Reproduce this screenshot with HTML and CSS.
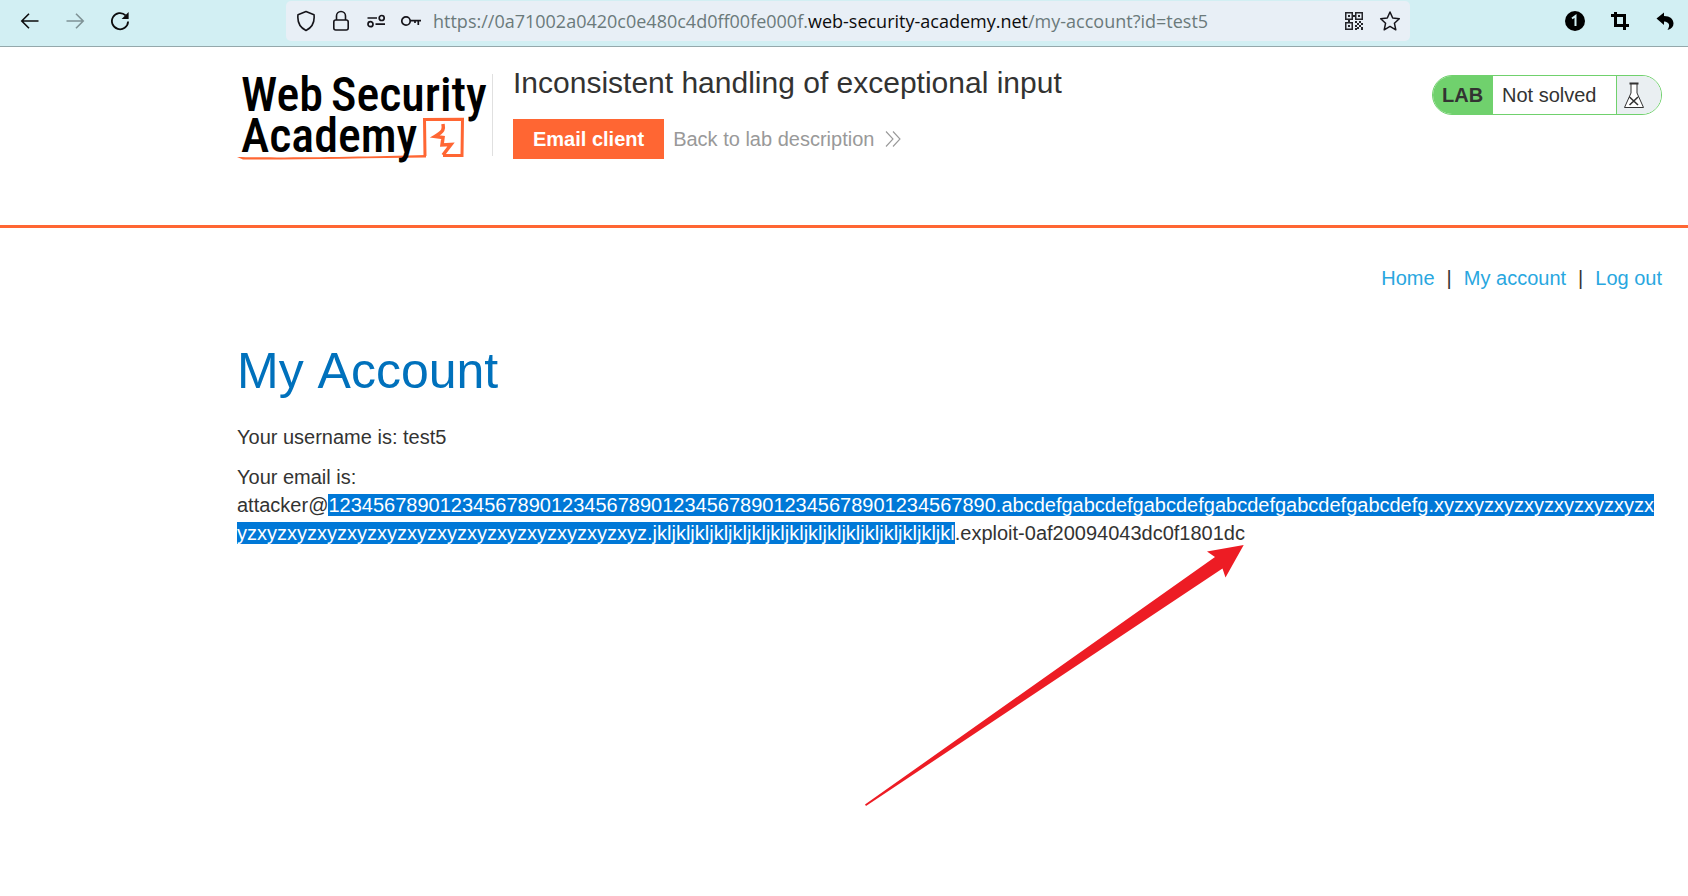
FILE: index.html
```html
<!DOCTYPE html>
<html lang="en">
<head>
<meta charset="utf-8">
<title>Inconsistent handling of exceptional input</title>
<link rel="stylesheet" href="styles.css">
</head>
<body>
<div class="toolbar">
  <div class="nav-buttons">
    <button class="icon-btn" aria-label="Back"><svg width="20" height="20" viewBox="0 0 20 20" fill="none" stroke="#0c0c0d" stroke-width="1.6"><path d="M18.500 10H2M9 2.800L1.800 10L9 17.200"/></svg></button>
    <button class="icon-btn" aria-label="Forward" disabled><svg width="20" height="20" viewBox="0 0 20 20" fill="none" stroke="#7f9396" stroke-width="1.600"><path d="M1.500 10H18M11 2.800L18.200 10L11 17.200"/></svg></button>
    <button class="icon-btn" aria-label="Reload"><svg width="20" height="20" viewBox="0 0 20 20" fill="none" stroke="#0c0c0d" stroke-width="1.800"><path d="M18.100 10.500A8.100 8.100 0 1 1 15.600 4.300"/><path d="M18.600 1v7h-7z" fill="#0c0c0d" stroke="none"/></svg></button>
  </div>
  <div class="address-bar">
    <div class="icon-group">
      <button class="icon-btn" aria-label="Tracking protection"><svg width="20" height="22" viewBox="0 0 20 22" fill="none" stroke="#15141a" stroke-width="1.600"><path d="M10 1.500L18 4.700C18.800 11.500 16 17.500 10 20.500C4 17.500 1.200 11.500 2 4.700Z" stroke-linejoin="round"/></svg></button>
      <button class="icon-btn" aria-label="Site information"><svg width="20" height="22" viewBox="0 0 20 22" fill="none" stroke="#15141a" stroke-width="1.600"><rect x="2.800" y="10" width="14.400" height="10" rx="2"/><path d="M5.500 10V6a4.500 4.500 0 0 1 9 0v4"/></svg></button>
      <button class="icon-btn" aria-label="Permissions"><svg width="20" height="22" viewBox="0 0 20 22" fill="none" stroke="#15141a" stroke-width="1.700"><path d="M1.500 8H11M9.500 14.200H19"/><circle cx="15.700" cy="8" r="2.500"/><circle cx="4.500" cy="14.200" r="2.500"/></svg></button>
      <button class="icon-btn" aria-label="Saved logins"><svg width="20" height="22" viewBox="0 0 20 22" fill="none" stroke="#15141a" stroke-width="1.700"><circle cx="5" cy="11" r="4.200"/><path d="M9.200 10.700H20M17.300 10.700V15M14 10.700V13"/></svg></button>
    </div>
    <div class="url" role="textbox" aria-label="Address">https://0a71002a0420c0e480c4d0ff00fe000f.<span class="url-domain">web-security-academy.net</span>/my-account?id=test5</div>
    <div class="icon-group">
      <button class="icon-btn" aria-label="QR code"><svg width="20" height="20" viewBox="0 0 20 20" fill="#25262b"><path fill-rule="evenodd" d="M1 1h8v8H1zM2.500 2.500v5h5v-5zM11 1h8v8h-8zM12.500 2.500v5h5v-5zM1 11h8v8H1zM2.500 12.500v5h5v-5z"/><path d="M4 4h2v2H4zM14 4h2v2h-2zM4 14h2v2H4zM11 10h2v2h-2zM15 10h2v2h-2zM13 12h2v2h-2zM17 12h2v2h-2zM11 14h2v2h-2zM15 14h2v2h-2zM13 16h2v2h-2zM17 16h2v3h-2zM11 17h2v2h-2zM9 4h2v2H9zM4 9h2v2H4z"/></svg></button>
      <button class="icon-btn" aria-label="Bookmark"><svg width="22" height="22" viewBox="0 0 22 22" fill="none" stroke="#15141a" stroke-width="1.500" stroke-linejoin="round"><path d="M11 2L13.700 8L20.300 8.700L15.400 13.200L16.800 19.800L11 16.400L5.200 19.800L6.600 13.200L1.700 8.700L8.300 8Z"/></svg></button>
    </div>
  </div>
  <div class="extensions">
    <button class="icon-btn" aria-label="Notifications"><svg width="20" height="20" viewBox="0 0 20 20"><circle cx="10" cy="10" r="10" fill="#000"/><path d="M7 7.500L10.500 5V15" fill="none" stroke="#d2eff3" stroke-width="2"/></svg></button>
    <button class="icon-btn" aria-label="Crop"><svg width="20" height="20" viewBox="0 0 20 20" fill="none" stroke="#000" stroke-width="3"><path d="M5.500 1V14.500H19M1 4.500H14.500V19"/></svg></button>
    <button class="icon-btn" aria-label="Undo"><svg width="20" height="20" viewBox="0 0 20 20"><path d="M1.500 7.500L9 1.500V5C15 5 18.500 8 18.500 12.500C18.500 15.500 16.500 18 12.500 19C15.500 14.500 14.500 11 9 10.500V14Z" fill="#000"/></svg></button>
  </div>
</div>

<header class="lab-header">
  <a class="logo" href="#" aria-label="Web Security Academy">
    <span class="logo-line"><span>Web</span><span>Security</span></span>
    <span class="logo-line">Academy</span>
    <svg class="logo-mark" width="230" height="44" viewBox="0 0 230 44" fill="none" stroke="#ff6633" stroke-width="3"><path d="M188 40L187.500 3.500L225.500 3.200L225 39.500L206 39.500"/><path d="M0 41C40 42 120 41 189 39V41.500C130 42 60 44 6 43.500Z" fill="#ff6633" stroke="none"/><path d="M206 8C207 13 207 15 198 20.500L206 21.500L205 29L214 28.500L206 39" stroke-width="3.500"/></svg>
  </a>
  <div class="lab-title">
    <h2>Inconsistent handling of exceptional input</h2>
    <div class="lab-links">
      <a class="email-button" href="#">Email client</a>
      <a class="back-link" href="#">Back to lab description <svg width="16" height="18" viewBox="0 0 16 18" fill="none" stroke="#999" stroke-width="1.100"><path d="M1 1.500L8 9L1 16.500M8 1.500L15 9L8 16.500"/></svg></a>
    </div>
  </div>
  <div class="lab-status">
    <strong>LAB</strong>
    <span class="status-text">Not solved</span>
    <span class="status-icon"><svg width="22" height="28" viewBox="0 0 22 28" fill="#fff" stroke="#333" stroke-width="1"><path d="M8 3V12L1.500 26.500H20.500L14 12V3"/><path d="M6.500 2.500H15.500" stroke-width="2"/><path d="M6.500 16L15 24M15 16L6.500 24" stroke-width="1.600"/></svg></span>
  </div>
</header>

<main>
  <nav class="account-nav">
    <a href="#">Home</a><span>|</span><a href="#">My account</a><span>|</span><a href="#">Log out</a>
  </nav>
  <section class="account">
    <h1>My Account</h1>
    <p>Your username is: test5</p>
    <p>Your email is: <span class="email">attacker@<mark>123456789012345678901234567890123456789012345678901234567890.abcdefgabcdefgabcdefgabcdefgabcdefgabcdefg.xyzxyzxyzxyzxyzxyzxyzxyzxyzxyzxyzxyzxyzxyzxyzxyzxyzxyzxyzxyzxyz.jkljkljkljkljkljkljkljkljkljkljkljkljkljkljkljkl</mark>.exploit-0af20094043dc0f1801dc</span></p>
  </section>
  <svg class="pointer" width="380" height="262" viewBox="0 0 380 262" fill="#ed1c24"><path d="M378.700 1L342 7.500L350 13L0 260.500L1 262L357.500 24.500L360.500 33.500Z"/></svg>
</main>
</body>
</html>
```

FILE: styles.css
```css
* { box-sizing: border-box; }
body {
  display: flex;
  flex-direction: column;
  min-height: 100vh;
  margin: 0;
  background: #fff;
  color: #333332;
  font: 20px/28px "Liberation Sans", Arial, sans-serif;
}
h1, h2, p { margin: 0; font-weight: 400; }
a { text-decoration: none; color: #29a7df; }
svg { display: block; }

.toolbar {
  display: flex;
  flex: none;
  height: 47px;
  padding: 1px 13px 5px 20px;
  background: #d2eff3;
  border-bottom: 1px solid #94a8ab;
}
.icon-btn {
  display: flex;
  flex: none;
  padding: 0;
  border: 0;
  background: none;
}
.nav-buttons, .extensions { display: flex; align-items: center; gap: 25px; }
.nav-buttons { padding-right: 156px; }
.extensions { padding-left: 155px; }
.address-bar {
  display: flex;
  flex: 1;
  align-items: center;
  gap: 12px;
  padding: 0 9px 0 10px;
  background: #e8eff6;
  border-radius: 5px;
}
.icon-group { display: flex; align-items: center; gap: 15px; }
.url {
  flex: 1;
  white-space: nowrap;
  font: 18px/28px "Open Sans", "Noto Sans", sans-serif;
  color: #6b7a7b;
}
.url-domain { color: #0c0c0d; }

.lab-header {
  display: flex;
  flex: none;
  align-items: flex-start;
  padding: 0 26px 66px 237px;
  border-bottom: 3px solid #ff6633;
}
.logo {
  position: relative;
  isolation: isolate;
  width: 256px;
  margin-top: 27px;
  padding-left: 4px;
  border-right: 1px solid #e0e0e0;
  color: #000;
  font: 500 48px/41px "Roboto Condensed", Roboto, sans-serif;
}
.logo-line { display: flex; gap: 8px; }
.logo-mark { position: absolute; z-index: -1; left: 0; top: 42px; }
.lab-title { flex: 1; padding: 20px 0 0 20px; }
.lab-title h2 { font-size: 30px; line-height: 32px; }
.lab-links { display: flex; align-items: center; gap: 9px; margin-top: 20px; }
.email-button {
  padding: 6px 20px;
  background: #ff6633;
  color: #fff;
  font-weight: 700;
}
.back-link { display: flex; align-items: center; gap: 11px; color: #999; }
.lab-status {
  display: flex;
  width: 230px;
  margin-top: 28px;
  border: 1px solid #70d16d;
  border-radius: 20px;
  overflow: hidden;
  line-height: 38px;
}
.lab-status strong { width: 60px; padding-left: 9px; background: #70d16d; }
.status-text { flex: 1; padding-left: 9px; }
.status-icon {
  width: 45px;
  padding: 5px 6px;
  background: #eaeff2;
  border-left: 1px solid #70d16d;
}

main { position: relative; flex: 1; padding: 36px 26px 0 237px; }
.account-nav { display: flex; justify-content: flex-end; gap: 12px; }
h1 { margin: 54px 0 27px; font-size: 50px; line-height: 50px; font-kerning: none; color: #0071bc; }
p { margin-bottom: 12px; overflow-wrap: break-word; }
mark { background: #0078d7; color: #fff; }
.pointer { position: absolute; left: 865px; top: 316px; }
```
